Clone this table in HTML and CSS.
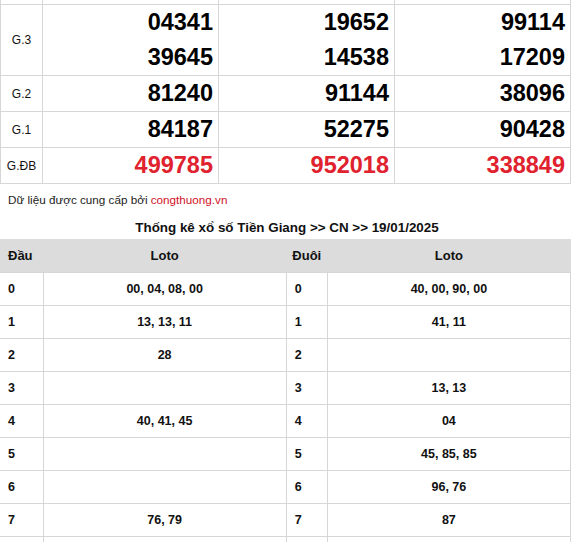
FILE: index.html
```html
<!DOCTYPE html>
<html lang="vi">
<head>
<meta charset="utf-8">
<title>Kết quả xổ số Tiền Giang</title>
<link rel="stylesheet" href="styles.css">
</head>
<body>
<table class="results">
  <colgroup><col class="c-label"><col class="c-num"><col class="c-num"><col class="c-num"></colgroup>
  <tr class="cut"><td></td><td></td><td></td><td></td></tr>
  <tr>
    <td class="label">G.3</td>
    <td class="num"><div>04341</div><div>39645</div></td>
    <td class="num"><div>19652</div><div>14538</div></td>
    <td class="num"><div>99114</div><div>17209</div></td>
  </tr>
  <tr>
    <td class="label">G.2</td>
    <td class="num"><div>81240</div></td>
    <td class="num"><div>91144</div></td>
    <td class="num"><div>38096</div></td>
  </tr>
  <tr>
    <td class="label">G.1</td>
    <td class="num"><div>84187</div></td>
    <td class="num"><div>52275</div></td>
    <td class="num"><div>90428</div></td>
  </tr>
  <tr>
    <td class="label">G.ĐB</td>
    <td class="num special"><div>499785</div></td>
    <td class="num special"><div>952018</div></td>
    <td class="num special"><div>338849</div></td>
  </tr>
</table>
<p class="source">Dữ liệu được cung cấp bởi <a href="#" class="source-link">congthuong.vn</a></p>
<h2 class="stats-title">Thống kê xổ số Tiền Giang &gt;&gt; CN &gt;&gt; 19/01/2025</h2>
<table class="stats">
  <colgroup><col class="s-key"><col class="s-loto"><col class="s-key2"><col class="s-loto"></colgroup>
  <tr class="head"><th>Đầu</th><th>Loto</th><th>Đuôi</th><th>Loto</th></tr>
  <tr><td>0</td><td>00, 04, 08, 00</td><td>0</td><td>40, 00, 90, 00</td></tr>
  <tr><td>1</td><td>13, 13, 11</td><td>1</td><td>41, 11</td></tr>
  <tr><td>2</td><td>28</td><td>2</td><td></td></tr>
  <tr><td>3</td><td></td><td>3</td><td>13, 13</td></tr>
  <tr><td>4</td><td>40, 41, 45</td><td>4</td><td>04</td></tr>
  <tr><td>5</td><td></td><td>5</td><td>45, 85, 85</td></tr>
  <tr><td>6</td><td></td><td>6</td><td>96, 76</td></tr>
  <tr><td>7</td><td>76, 79</td><td>7</td><td>87</td></tr>
  <tr class="more"><td></td><td></td><td></td><td></td></tr>
</table>
</body>
</html>
```
FILE: styles.css
```css
html, body {
  margin: 0;
  padding: 0;
  background: #fff;
  font-family: "Liberation Sans", Arial, sans-serif;
  color: #222;
}

.results {
  width: 571px;
  border-collapse: collapse;
  table-layout: fixed;
}
.c-label { width: 42px; }
.results td {
  border: 1px solid #d6d6d6;
  padding: 0;
}
.results .cut td {
  height: 4px;
  border-top: none;
}
.results .label {
  text-align: center;
  font-size: 12px;
  color: #111;
}
.results .num {
  text-align: right;
  padding-right: 5px;
  font-size: 23.5px;
  font-weight: bold;
  color: #000;
}
.results .num div {
  height: 35px;
  line-height: 35px;
}
.results .special {
  color: #e0212e;
}

.source {
  margin: 0;
  padding: 9px 8px 6px;
  font-size: 11.7px;
  line-height: 14px;
  color: #222;
}
.source-link {
  color: #d0111f;
  text-decoration: none;
}

.stats-title {
  margin: 0;
  padding: 5px 0 2px;
  font-size: 13.4px;
  line-height: 19px;
  font-weight: bold;
  text-align: center;
  color: #111;
}

.stats {
  width: 571px;
  border-collapse: collapse;
  table-layout: fixed;
}
.s-key { width: 43px; }
.s-key2 { width: 41px; }
.stats th {
  background: #dcdcdc;
  height: 33px;
  padding: 0;
  font-size: 13px;
  font-weight: bold;
  color: #111;
  text-align: center;
  border: none;
}
.stats th:first-child { text-align: left; padding-left: 8px; }
.stats td {
  border: 1px solid #d6d6d6;
  height: 32px;
  padding: 0;
  font-size: 12.5px;
  font-weight: bold;
  color: #111;
  text-align: center;
}
.stats td:nth-child(1), .stats td:nth-child(3) {
  text-align: left;
  padding-left: 8px;
}
.stats tr td:first-child { border-left: none; }
```
